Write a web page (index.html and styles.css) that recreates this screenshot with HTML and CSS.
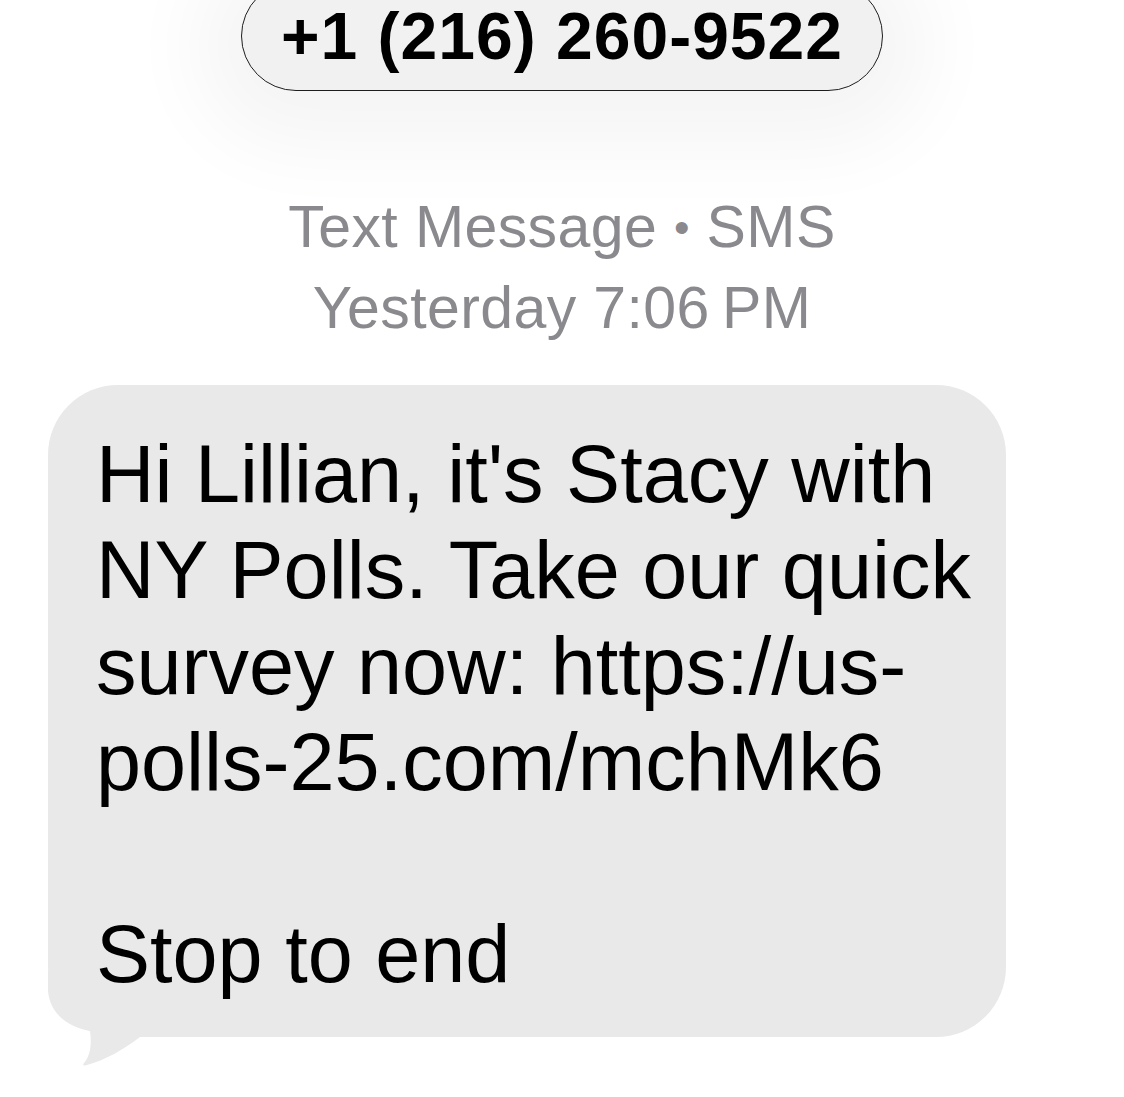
FILE: index.html
```html
<!DOCTYPE html>
<html lang="en">
<head>
    <meta charset="UTF-8">
    <title>+1 (216) 260-9522</title>
    <link rel="stylesheet" href="styles.css">
</head>
<body>

<div class="header">
    <div class="contact-pill">+1 (216) 260-9522</div>
</div>

<div class="thread">
    <div class="meta">
        Text Message <span class="dot">•</span> SMS<br>
        Yesterday 7:06&#8239;PM
    </div>

    <div class="bubble">
        <p class="bubble-text">Hi Lillian, it's Stacy with<br>NY Polls. Take our quick<br>survey now: https://us-<br>polls-25.com/mchMk6<br><br>Stop to end</p>
        <!-- tail of the incoming bubble -->
        <svg class="tail" width="100" height="110" viewBox="0 0 100 110">
            <path d="M0 14 L0 34 C2 56 19 70 42 74 C44 88 42 99 36 106 C34 109 36 109 39 108 C58 103 76 92 92 80 L92 44 Z" fill="#e9e9e9"/>
        </svg>
    </div>
</div>

</body>
</html>
```

FILE: styles.css
```css
body {
    margin: 0;
    background-color: #fff;
    font-family: "Liberation Sans", Arial, sans-serif;
}
.header {
    display: flex;
    justify-content: center;
}
.contact-pill {
    margin-top: -19px;
    width: 642px;
    height: 110px;
    box-sizing: border-box;
    display: flex;
    align-items: center;
    justify-content: center;
    background-color: #f1f1f1;
    border: 1.5px solid #1e1e1e;
    border-radius: 55px;
    box-shadow: 0 10px 80px 45px rgba(0,0,0,0.045);
    font-size: 66px;
    font-weight: bold;
    letter-spacing: 1px;
    color: #000;
}
.thread {
    padding: 96px 118px 60px 48px;
}
.meta {
    text-align: center;
    padding-left: 70px;
    color: #8a8a8e;
    font-size: 59px;
    letter-spacing: 0.4px;
    line-height: 80px;
}
.dot {
    font-size: 0.75em;
    vertical-align: 0.08em;
}
.bubble {
    position: relative;
    margin-top: 37px;
    width: 958px;
    box-sizing: border-box;
    padding: 41px 40px 35px 48px;
    background-color: #e9e9e9;
    border-radius: 70px;
}
.bubble-text {
    margin: 0;
    font-size: 81px;
    line-height: 96px;
    color: #000;
    white-space: nowrap;
}
.tail {
    position: absolute;
    left: 0;
    bottom: -30px;
}
```
